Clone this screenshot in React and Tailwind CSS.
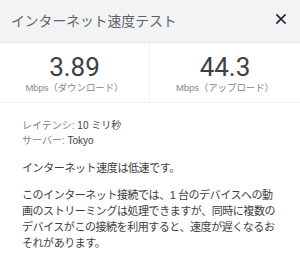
import React from "react";

const font = {
  fontFamily: '"Liberation Sans", Arial, "Noto Sans CJK JP", sans-serif',
};

const Stat = ({ value, label, border }) => (
  <div
    className={`flex flex-col items-center pt-[11px] ${
      border ? "border-r border-[#f1f3f4]" : ""
    }`}
  >
    <div className="text-[26px] leading-[26px] text-[#3c4043] font-['Roboto',sans-serif]">
      {value}
    </div>
    <div className="text-[9.5px] leading-[14px] mt-[1px] text-[#80868b] tracking-[-0.1px]">
      {label}
    </div>
  </div>
);

const App = () => {
  return (
    <div className="w-[300px] h-[262px] bg-white overflow-hidden" style={font}>
      {/* Header */}
      <div className="h-[43px] bg-[#f1f3f4] border-b border-[#e3e5e8] flex items-center justify-between pl-[11px] pr-[14px]">
        <div className="text-[13.8px] mt-[2px] text-[#5f6368]">
          インターネット速度テスト
        </div>
        <svg width="10" height="10" viewBox="0 0 10 10" className="mt-[-4px]">
          <path
            d="M1 1L9 9M9 1L1 9"
            stroke="#202124"
            strokeWidth="1.7"
            strokeLinecap="square"
          />
        </svg>
      </div>

      {/* Stats */}
      <div className="grid grid-cols-2 h-[60px] border-b border-[#f1f3f4]">
        <Stat value="3.89" label="Mbps（ダウンロード）" border />
        <Stat value="44.3" label="Mbps（アップロード）" />
      </div>

      {/* Details */}
      <div className="px-[22px] pt-[15px]">
        <div className="text-[10px] leading-[15px] text-[#80868b]">
          <p>
            レイテンシ: <span className="text-[#3c4043]">10 ミリ秒</span>
          </p>
          <p>
            サーバー: <span className="text-[#3c4043]">Tokyo</span>
          </p>
        </div>
        <p className="mt-[12px] text-[11px] leading-[16.5px] text-[#3c4043] tracking-[-0.4px]">
          インターネット速度は低速です。
        </p>
        <p className="mt-[10px] text-[11px] leading-[16.3px] text-[#3c4043] tracking-[-0.45px]">
          このインターネット接続では、1 台のデバイスへの動画のストリーミングは処理できますが、同時に複数のデバイスがこの接続を利用すると、速度が遅くなるおそれがあります。
        </p>
      </div>
    </div>
  );
};

export default App;
